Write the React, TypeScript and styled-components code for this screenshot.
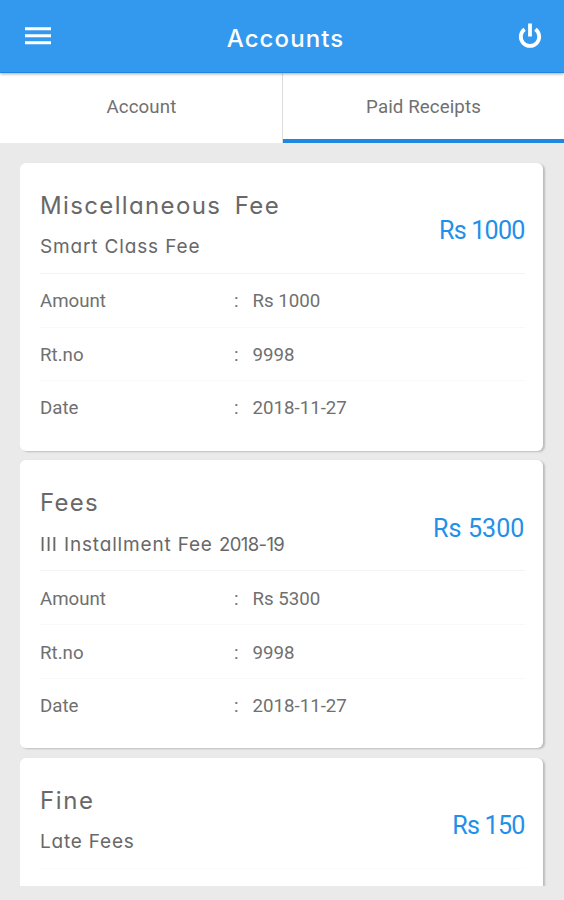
import React from "react";
import styled, { createGlobalStyle } from "styled-components";

const GlobalStyle = createGlobalStyle`
  * { box-sizing: border-box; }
  body { margin: 0; background: #eaeaea; }
`;

const Screen = styled.div`
  display: flex;
  flex-direction: column;
  height: 900px;
  overflow: hidden;
  background: #eaeaea;
  color: #707070;
  font-family: Roboto, sans-serif;
`;

const Header = styled.header`
  position: relative;
  z-index: 1;
  display: grid;
  grid-template-columns: 48px 1fr 48px;
  align-items: center;
  flex: none;
  height: 72.5px;
  padding: 0 10px 0 14px;
  background: #3399ee;
  border-bottom: 1px solid #1d88e3;
  box-shadow: 0 1px 3px rgba(0, 0, 0, 0.35);
`;

const IconButton = styled.button`
  display: flex;
  align-items: center;
  justify-content: center;
  height: 48px;
  padding: 0;
  border: 0;
  background: none;
  color: #fff;
`;

const RoundedText = styled.div<{ $size: number; $spacing: number; $weight: number; $wordGap?: number }>`
  font-family: Inter, sans-serif;
  font-feature-settings: "cv11", "ss03";
  font-size: ${(p) => p.$size}px;
  font-weight: ${(p) => p.$weight};
  letter-spacing: ${(p) => p.$spacing}px;
  word-spacing: ${(p) => p.$wordGap ?? 0}px;
  white-space: pre;
`;

const Title = styled(RoundedText)`
  padding: 5px 0 0 3px;
  color: #fff;
  text-align: center;
`;

const Tabs = styled.nav`
  display: grid;
  grid-template-columns: 283px 1fr;
  flex: none;
  height: 70px;
  background: #fff;
`;

const Tab = styled.div<{ $active?: boolean }>`
  display: flex;
  align-items: center;
  justify-content: center;
  padding-top: 2px;
  font-size: 18.7px;
  letter-spacing: 0.1px;
  border-bottom: ${(p) => (p.$active ? "4px solid #1e88e0" : "4px solid transparent")};
  & + & { box-shadow: -1px 0 0 #dcdcdc; }
`;

const List = styled.main`
  display: flex;
  flex-direction: column;
  gap: 9.5px;
  height: 743.5px;
  padding: 20px 20px 0;
  overflow: hidden;
`;

const Card = styled.article`
  flex: none;
  width: 522.5px;
  height: 288px;
  padding: 0 18px 0 20px;
  border-radius: 6px;
  background: #fff;
  box-shadow: 2px 1px 2px rgba(0, 0, 0, 0.2);
`;

const CardHead = styled.div<{ $faint: boolean }>`
  display: flex;
  align-items: center;
  justify-content: space-between;
  height: 111px;
  border-bottom: 1px solid ${(p) => (p.$faint ? "#fcfcfc" : "#f3f3f3")};
`;

const Names = styled.div`
  display: flex;
  flex-direction: column;
  padding-top: 18.4px;
  color: #686868;
`;

const Name = styled(RoundedText)`
  height: 41.2px;
  line-height: 36px;
`;

const Detail = styled(RoundedText)`
  line-height: 36px;
`;

const Digits = styled.span`
  font-size: 18.5px;
  letter-spacing: -0.6px;
`;

const Price = styled.div<{ $spacing: number }>`
  padding-top: 26.4px;
  color: #2290e8;
  font-size: 25.1px;
  letter-spacing: ${(p) => p.$spacing}px;
`;

const Row = styled.div`
  display: grid;
  grid-template-columns: 194px 18.5px 1fr;
  align-items: center;
  height: 53.4px;
  padding-top: 2px;
  font-size: 18.7px;
  & + & { border-top: 1px solid #f8f8f8; }
`;

type Receipt = {
  name: string;
  nameSpacing: number;
  nameGap?: number;
  detail: string;
  year?: string;
  detailSpacing: number;
  price: string;
  priceSpacing: number;
  rows: [string, string][];
};

const receipts: Receipt[] = [
  {
    name: "Miscellaneous  Fee",
    nameSpacing: 1.36,
    nameGap: -1.4,
    detail: "Smart Class Fee",
    detailSpacing: 0.85,
    price: "Rs 1000",
    priceSpacing: -0.8,
    rows: [["Amount", "Rs 1000"], ["Rt.no", "9998"], ["Date", "2018-11-27"]],
  },
  {
    name: "Fees",
    nameSpacing: 1.3,
    detail: "III Installment Fee ",
    year: "2018-19",
    detailSpacing: 0.83,
    price: "Rs 5300",
    priceSpacing: 0.05,
    rows: [["Amount", "Rs 5300"], ["Rt.no", "9998"], ["Date", "2018-11-27"]],
  },
  { name: "Fine", nameSpacing: 1.6, detail: "Late Fees", detailSpacing: 0.8, price: "Rs 150", priceSpacing: -0.8, rows: [] },
];

function MenuIcon() {
  return (
    <svg width="26" height="18" viewBox="0 0 26 18" fill="currentColor">
      <path d="M0 0.2h26v3H0zM0 7.3h26v3H0zM0 14.3h26v3H0z" />
    </svg>
  );
}

function PowerIcon() {
  return (
    <svg width="26" height="28" viewBox="0 0 26 28" fill="none" stroke="currentColor" strokeWidth="3.8">
      <path d="M13 1.5v13" />
      <path d="M7.6 7.3a9.2 9.2 0 1 0 10.8 0" />
    </svg>
  );
}

function ReceiptCard({ receipt }: { receipt: Receipt }) {
  return (
    <Card>
      <CardHead $faint={receipt.rows.length === 0}>
        <Names>
          <Name $size={24} $weight={400} $spacing={receipt.nameSpacing} $wordGap={receipt.nameGap}>
            {receipt.name}
          </Name>
          <Detail $size={19} $weight={400} $spacing={receipt.detailSpacing}>
            {receipt.detail}
            {receipt.year && <Digits>{receipt.year}</Digits>}
          </Detail>
        </Names>
        <Price $spacing={receipt.priceSpacing}>{receipt.price}</Price>
      </CardHead>
      {receipt.rows.map(([label, value]) => (
        <Row key={label}>
          <span>{label}</span>
          <span>:</span>
          <span>{value}</span>
        </Row>
      ))}
    </Card>
  );
}

export default function App() {
  return (
    <Screen>
      <GlobalStyle />
      <Header>
        <IconButton aria-label="Menu"><MenuIcon /></IconButton>
        <Title $size={24} $weight={500} $spacing={1.1}>Accounts</Title>
        <IconButton aria-label="Log out"><PowerIcon /></IconButton>
      </Header>
      <Tabs>
        <Tab>Account</Tab>
        <Tab $active>Paid Receipts</Tab>
      </Tabs>
      <List>
        {receipts.map((r) => (
          <ReceiptCard key={r.name} receipt={r} />
        ))}
      </List>
    </Screen>
  );
}
